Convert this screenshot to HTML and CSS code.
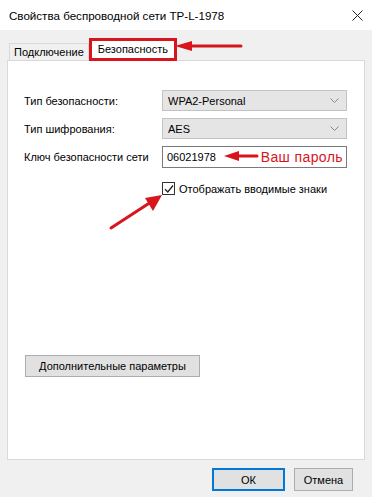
FILE: index.html
```html
<!DOCTYPE html>
<html lang="ru">
<head>
  <meta charset="UTF-8" />
  <title>Свойства беспроводной сети TP-L-1978</title>
  <link rel="stylesheet" href="styles.css">
</head>
<body>

<div class="ventana">
  <header class="titulo">
    <span>Свойства беспроводной сети TP-L-1978</span>
    <svg class="cerrar" width="11" height="11" viewBox="0 0 11 11"><path d="M0.5 0.5 L10.5 10.5 M10.5 0.5 L0.5 10.5" stroke="#222" stroke-width="1" fill="none"/></svg>
  </header>

  <div class="cuerpo">
    <nav class="pestanas">
      <div class="pestana">Подключение</div>
      <div class="pestana activa">Безопасность</div>
    </nav>

    <section class="panel">
      <div class="formulario">
        <label>Тип безопасности:</label>
        <div class="lista">WPA2-Personal
          <svg width="9" height="5" viewBox="0 0 9 5"><path d="M0.5 0.5 L4.5 4.5 L8.5 0.5" fill="none" stroke="#888" stroke-width="1"/></svg>
        </div>

        <label>Тип шифрования:</label>
        <div class="lista">AES
          <svg width="9" height="5" viewBox="0 0 9 5"><path d="M0.5 0.5 L4.5 4.5 L8.5 0.5" fill="none" stroke="#888" stroke-width="1"/></svg>
        </div>

        <label>Ключ безопасности сети</label>
        <div class="campo">06021978 <span class="nota">Ваш пароль</span></div>

        <span></span>
        <div class="casilla">
          <span class="check">
            <svg width="10" height="10" viewBox="0 0 10 10"><path d="M1 5.2 L3.8 8 L9 1.5" fill="none" stroke="#222" stroke-width="1.3"/></svg>
          </span>
          Отображать вводимые знаки
        </div>
      </div>

      <button class="boton extra">Дополнительные параметры</button>
    </section>

    <footer class="pie">
      <button class="boton ok">ОК</button>
      <button class="boton">Отмена</button>
    </footer>
  </div>

  <svg class="anotaciones" width="372" height="497" viewBox="0 0 372 497">
    <g fill="#d8141c" stroke="#d8141c">
      <line x1="188" y1="46" x2="241" y2="46" stroke-width="3" stroke-linecap="round"/>
      <polygon points="175,46 192,41 192,51" stroke="none"/>
      <line x1="236" y1="156" x2="257" y2="156" stroke-width="3" stroke-linecap="round"/>
      <polygon points="224,156 239,151 239,161" stroke="none"/>
      <line x1="111" y1="228" x2="151" y2="202" stroke-width="3" stroke-linecap="round"/>
      <polygon points="162,195 145,198 153,211" stroke="none"/>
    </g>
  </svg>
</div>

</body>
</html>
```

FILE: styles.css
```css
body { margin: 0; font-family: "Liberation Sans", Arial, sans-serif; font-size: 11px; color: #000; }
.ventana { position: relative; width: 372px; height: 497px; background: #f0f0f0; overflow: hidden; }
.titulo { height: 30px; background: #fff; display: flex; align-items: center; justify-content: space-between; padding: 0 9px 0 9px; font-size: 11.6px; }
.cuerpo { padding: 7px 7px 0 7px; }
.pestanas { display: flex; align-items: flex-end; height: 23px; padding-left: 2px; }
.pestana { height: 16px; line-height: 16px; padding: 0 4px; border: 1px solid #d9d9d9; border-bottom: none; background: #f0f0f0; }
.pestana.activa { height: 17px; line-height: 17px; padding: 0 6px; margin-bottom: -1px; background: #fff; border: 3px solid #d8141c; position: relative; z-index: 1; }
.panel { background: #fff; border: 1px solid #d9d9d9; padding: 29px 17px 0 16px; box-sizing: border-box; height: 400px; }
.formulario { display: grid; grid-template-columns: 138px 185px; row-gap: 7px; align-items: center; }
.lista { height: 21px; box-sizing: border-box; border: 1px solid #c3c3c3; background: #e5e5e5; display: flex; align-items: center; justify-content: space-between; padding: 0 7px 0 5px; }
.campo { height: 22px; box-sizing: border-box; border: 1px solid #7a7a7a; background: #fff; display: flex; align-items: center; justify-content: space-between; padding: 0 3px 0 4px; }
.nota { color: #d8141c; font-size: 14px; letter-spacing: 0.4px; }
.casilla { display: flex; align-items: center; gap: 4px; margin-top: 7px; }
.check { width: 11px; height: 11px; border: 1px solid #333; display: flex; align-items: center; justify-content: center; background: #fff; }
.boton { font-family: inherit; font-size: 11px; color: #000; background: #e1e1e1; border: 1px solid #adadad; height: 22px; padding: 0; }
.extra { width: 175px; margin-top: 160px; margin-left: 1px; }
.pie { display: flex; justify-content: flex-end; gap: 9px; padding: 8px 12px 0 0; }
.ok { width: 73px; height: 23px; border: 2px solid #0078d7; }
.pie .boton:last-child { width: 59px; height: 23px; }
.anotaciones { position: absolute; top: 0; left: 0; pointer-events: none; }
```
